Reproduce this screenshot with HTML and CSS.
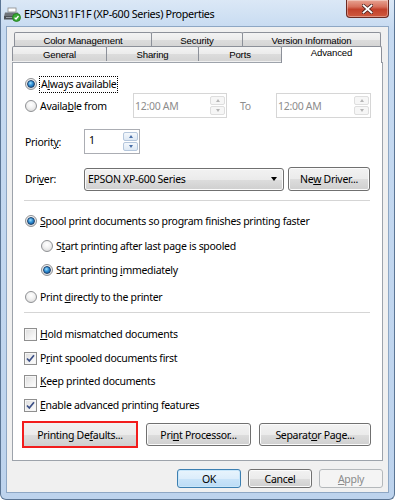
FILE: index.html
```html
<!DOCTYPE html>
<html lang="en">
<head>
    <meta charset="UTF-8">
    <title>EPSON311F1F (XP-600 Series) Properties</title>
    <link rel="stylesheet" href="styles.css">
</head>
<body>
    <div class="window">
        <div class="titlebar">
            <svg class="app-icon" width="17" height="15" viewBox="0 0 17 15">
                <rect x="4" y="1" width="8" height="4" fill="#fff" stroke="#8a8a8a" stroke-width="0.8"/>
                <path d="M1 5.5 H14 L15 9.5 H0 Z" fill="#6f747a"/>
                <rect x="0" y="9" width="15" height="3.5" fill="#4d5258"/>
                <rect x="2" y="10" width="9" height="1" fill="#9aa0a6"/>
                <circle cx="12.5" cy="10.5" r="4" fill="#3aaa35" stroke="#1f7a1c" stroke-width="0.8"/>
                <path d="M10.6 10.6 L12 12 L14.5 9" fill="none" stroke="#fff" stroke-width="1.3"/>
            </svg>
            <span class="title">EPSON311F1F (XP-600 Series) Properties</span>
            <div class="close-btn">
                <svg width="11" height="10" viewBox="0 0 11 10">
                    <path d="M1.5 1.5 L9.5 8.5 M9.5 1.5 L1.5 8.5" stroke="#4b2320" stroke-width="3.4" stroke-linecap="square"/>
                    <path d="M1.5 1.5 L9.5 8.5 M9.5 1.5 L1.5 8.5" stroke="#fff" stroke-width="1.8" stroke-linecap="square"/>
                </svg>
            </div>
        </div>

        <div class="client">
            <div class="tabs">
                <div class="tab-row back">
                    <div class="tab">Color Management</div>
                    <div class="tab">Security</div>
                    <div class="tab">Version Information</div>
                </div>
                <div class="tab-row front">
                    <div class="tab">General</div>
                    <div class="tab">Sharing</div>
                    <div class="tab">Ports</div>
                    <div class="tab active">Advanced</div>
                </div>
            </div>

            <div class="panel">
                <div class="row r-always">
                    <span class="radio checked"></span>
                    <span class="label focus">A<u>l</u>ways available</span>
                </div>

                <div class="row r-from">
                    <div class="opt">
                        <span class="radio"></span>
                        <span class="label">Availa<u>b</u>le from</span>
                    </div>
                    <div class="spin disabled">
                        <span class="spin-value">12:00 AM</span>
                        <span class="spin-btns"><span class="spin-up"></span><span class="spin-down"></span></span>
                    </div>
                    <span class="to">To</span>
                    <div class="spin disabled">
                        <span class="spin-value">12:00 AM</span>
                        <span class="spin-btns"><span class="spin-up"></span><span class="spin-down"></span></span>
                    </div>
                </div>

                <div class="row r-priority">
                    <span class="field-label">Priorit<u>y</u>:</span>
                    <div class="spin priority">
                        <span class="spin-value">1</span>
                        <span class="spin-btns"><span class="spin-up"></span><span class="spin-down"></span></span>
                    </div>
                </div>

                <div class="row r-driver">
                    <span class="field-label">Dri<u>v</u>er:</span>
                    <div class="combo">
                        <span>EPSON XP-600 Series</span>
                        <span class="combo-arrow"></span>
                    </div>
                    <div class="btn new-driver"><span>Ne<u>w</u> Driver...</span></div>
                </div>

                <div class="separator sep-1"></div>

                <div class="row r-spool">
                    <span class="radio checked"></span>
                    <span class="label"><u>S</u>pool print documents so program finishes printing faster</span>
                </div>
                <div class="row sub r-after">
                    <span class="radio"></span>
                    <span class="label">S<u>t</u>art printing after last page is spooled</span>
                </div>
                <div class="row sub r-immediately">
                    <span class="radio checked"></span>
                    <span class="label">Start printing <u>i</u>mmediately</span>
                </div>
                <div class="row r-direct">
                    <span class="radio"></span>
                    <span class="label">Print <u>d</u>irectly to the printer</span>
                </div>

                <div class="separator sep-2"></div>

                <div class="row r-hold">
                    <span class="checkbox"></span>
                    <span class="label"><u>H</u>old mismatched documents</span>
                </div>
                <div class="row r-spooled">
                    <span class="checkbox checked">
                        <svg width="11" height="11" viewBox="0 0 11 11"><path d="M2 5.5 L4.3 8 L9 2.2" fill="none" stroke="#3b4f86" stroke-width="1.7"/></svg>
                    </span>
                    <span class="label">P<u>r</u>int spooled documents first</span>
                </div>
                <div class="row r-keep">
                    <span class="checkbox"></span>
                    <span class="label"><u>K</u>eep printed documents</span>
                </div>
                <div class="row r-enable">
                    <span class="checkbox checked">
                        <svg width="11" height="11" viewBox="0 0 11 11"><path d="M2 5.5 L4.3 8 L9 2.2" fill="none" stroke="#3b4f86" stroke-width="1.7"/></svg>
                    </span>
                    <span class="label"><u>E</u>nable advanced printing features</span>
                </div>

                <div class="button-row">
                    <div class="btn marked"><span>Printing De<u>f</u>aults...</span></div>
                    <div class="btn processor"><span>Pri<u>n</u>t Processor...</span></div>
                    <div class="btn separator-page"><span>Separat<u>o</u>r Page...</span></div>
                </div>
            </div>

            <div class="footer">
                <div class="btn dlg default">OK</div>
                <div class="btn dlg">Cancel</div>
                <div class="btn dlg disabled"><span><u>A</u>pply</span></div>
            </div>
        </div>
    </div>
</body>
</html>
```

FILE: styles.css
```css
* {
    margin: 0;
    padding: 0;
    box-sizing: border-box;
}

body {
    font-family: 'Noto Sans', 'Open Sans', sans-serif;
    font-size: 10.5px;
    letter-spacing: -0.3px;
    color: #000;
    background: #fff;
}

u {
    text-decoration: underline;
    text-underline-offset: 1px;
}

/* window frame */

.window {
    width: 395px;
    height: 500px;
    display: flex;
    flex-direction: column;
    background: linear-gradient(180deg, #dbe8f6 0%, #c6daf1 30px, #bdd3ed 100%);
    border: 1px solid #5b7594;
    border-top: none;
    border-radius: 0 0 6px 6px;
    padding: 0 5px 6px 5px;
}

.titlebar {
    height: 26px;
    display: flex;
    align-items: center;
    flex: none;
}

.app-icon {
    margin: 2px 3px 0 -2px;
    flex: none;
}

.title {
    flex: 1;
    font-size: 10.8px;
    letter-spacing: -0.35px;
    padding-top: 1px;
}

.close-btn {
    align-self: flex-start;
    width: 43px;
    height: 18px;
    border: 1px solid #6b2a22;
    border-top: none;
    border-radius: 0 0 4px 4px;
    background: linear-gradient(180deg, #e8a493 0%, #d7705c 40%, #c2412b 55%, #cf5a3f 100%);
    box-shadow: inset 0 0 0 1px rgba(255, 255, 255, 0.35);
    display: flex;
    align-items: center;
    justify-content: center;
}

.client {
    flex: 1;
    background: #f0f0f0;
    border: 1px solid #8ea7c4;
    padding: 5px 5px 0 5px;
    display: flex;
    flex-direction: column;
}

/* tabs */

.tabs {
    font-family: 'Liberation Sans', Arial, sans-serif;
    font-size: 9.6px;
    letter-spacing: -0.15px;
}

.tab-row {
    display: flex;
}

.tab-row.back {
    margin: 0 1px 0 2px;
}

.tab-row.front {
    margin-top: -1px;
}

.tab {
    height: 15px;
    border: 1px solid #8c9099;
    border-bottom: none;
    margin-right: -1px;
    border-radius: 2px 2px 0 0;
    background: linear-gradient(180deg, #f3f3f3 0%, #ebebeb 50%, #dcdcdc 51%, #d4d4d4 100%);
    display: flex;
    align-items: center;
    justify-content: center;
}

.back .tab:nth-child(1) { width: 138px; }
.back .tab:nth-child(2) { width: 92px; }
.back .tab:nth-child(3) { width: 139px; margin-right: 0; }

.front .tab:nth-child(1) { width: 95px; }
.front .tab:nth-child(2) { width: 93px; }
.front .tab:nth-child(3) { width: 84px; }

.tab.active {
    width: 101px;
    margin-right: 0;
    height: 17px;
    margin-bottom: -1px;
    background: #fff;
    position: relative;
    align-items: flex-start;
    z-index: 1;
}

/* panel */

.panel {
    height: 399px;
    flex: none;
    background: #fff;
    border: 1px solid #9da3ab;
    padding: 12px 11px 0 11px;
}

.row {
    display: flex;
    align-items: center;
    height: 18px;
}

.label {
    margin-left: 3px;
    white-space: nowrap;
}

.label.focus {
    border: 1px dotted #000;
    padding: 0 1px 1px 1px;
    margin-left: 2px;
}

.radio {
    width: 12px;
    height: 12px;
    margin-left: 1px;
    border-radius: 50%;
    border: 1px solid #8f9194;
    background: radial-gradient(circle at 50% 35%, #ffffff 0%, #f1f1f1 45%, #d2d2d2 100%);
    display: flex;
    align-items: center;
    justify-content: center;
    flex: none;
}

.radio.checked::after {
    content: '';
    width: 6px;
    height: 6px;
    border-radius: 50%;
    background: radial-gradient(circle at 40% 35%, #9fe0ff 0%, #2f8fd4 45%, #114a86 100%);
    border: 0.5px solid #1b3f6b;
}

.checkbox {
    width: 13px;
    height: 13px;
    border: 1px solid #8f8f8f;
    background: linear-gradient(135deg, #dcdcdc 0%, #f2f2f2 60%, #ffffff 100%);
    box-shadow: inset 0 0 0 1px #f5f5f5;
    display: flex;
    align-items: center;
    justify-content: center;
    flex: none;
}

.r-from {
    display: grid;
    grid-template-columns: 109px 94px 49px 95px;
    align-items: center;
    height: 25px;
}

.opt {
    display: flex;
    align-items: center;
}

.to {
    padding-left: 13px;
    color: #8d8d8d;
}

.spin {
    display: flex;
    height: 25px;
    border: 1px solid #abadb3;
    background: #fff;
}

.spin-value {
    flex: 1;
    padding-left: 1px;
    display: flex;
    align-items: center;
}

.spin-btns {
    width: 16px;
    display: flex;
    flex-direction: column;
    gap: 1px;
    padding: 2px 1px 2px 0;
}

.spin-up,
.spin-down {
    flex: 1;
    border: 1px solid #c9cbcf;
    border-radius: 2px;
    background: linear-gradient(180deg, #fbfbfb 0%, #ececec 100%);
    display: flex;
    align-items: center;
    justify-content: center;
}

.spin-up::after {
    content: '';
    border-left: 2.5px solid transparent;
    border-right: 2.5px solid transparent;
    border-bottom: 3px solid #9a9a9a;
}

.spin-down::after {
    content: '';
    border-left: 2.5px solid transparent;
    border-right: 2.5px solid transparent;
    border-top: 3px solid #9a9a9a;
}

.spin.disabled {
    border-color: #d6d6d6;
    color: #8d8d8d;
}

.spin.disabled .spin-up,
.spin.disabled .spin-down {
    border-color: #dedede;
    background: #f6f6f6;
}

.spin.disabled .spin-up::after { border-bottom-color: #b5b5b5; }
.spin.disabled .spin-down::after { border-top-color: #b5b5b5; }

.r-priority {
    height: 25px;
    margin-top: 11px;
}

.field-label {
    width: 60px;
    padding-left: 1px;
    flex: none;
}

.spin.priority {
    width: 56px;
}

.spin.priority .spin-value {
    align-items: flex-start;
    padding: 3px 0 0 4px;
}

.spin.priority .spin-up,
.spin.priority .spin-down {
    border-color: #b4c6dc;
    background: linear-gradient(180deg, #f4f8fc 0%, #dde8f4 100%);
}

.spin.priority .spin-up::after { border-bottom-color: #4a6fa8; }
.spin.priority .spin-down::after { border-top-color: #4a6fa8; }

.r-driver {
    height: 24px;
    margin-top: 13px;
}

.combo {
    width: 200px;
    height: 23px;
    border: 1px solid #707070;
    border-radius: 3px;
    background: linear-gradient(180deg, #f2f2f2 0%, #ebebeb 50%, #dddddd 51%, #cfcfcf 100%);
    box-shadow: inset 0 0 0 1px #fbfbfb;
    display: flex;
    align-items: center;
    justify-content: space-between;
    padding: 0 6px 0 3px;
}

.combo-arrow {
    border-left: 3.5px solid transparent;
    border-right: 3.5px solid transparent;
    border-top: 4px solid #000;
}

.btn {
    height: 23px;
    border: 1px solid #707070;
    border-radius: 3px;
    background: linear-gradient(180deg, #f2f2f2 0%, #ebebeb 50%, #dddddd 51%, #cfcfcf 100%);
    box-shadow: inset 0 0 0 1px #fbfbfb;
    display: flex;
    align-items: center;
    justify-content: center;
    white-space: nowrap;
    flex: none;
}

.new-driver {
    width: 82px;
    height: 24px;
    margin-left: 4px;
}

.separator {
    height: 1px;
    background: #d5d5d5;
    margin-right: 1px;
}

.sep-1 { margin-top: 9px; }
.r-spool { margin-top: 11px; }
.row.sub { padding-left: 16px; }
.r-after { margin-top: 7px; }
.r-immediately { margin-top: 6px; }
.r-direct { margin-top: 9px; }
.sep-2 { margin-top: 6px; }
.r-hold { margin-top: 12px; }
.r-spooled { margin-top: 6px; }
.r-keep { margin-top: 5px; }
.r-enable { margin-top: 6px; }

.button-row {
    display: flex;
    align-items: center;
    gap: 7px;
    height: 23px;
    margin-top: 9px;
}

.btn.marked {
    width: 116px;
    height: 27px;
    margin-left: -2px;
    border: 2px solid #f21d1d;
    border-radius: 0;
    box-shadow: none;
}

.btn.processor { width: 105px; margin-left: 1px; }
.btn.separator-page { width: 112px; margin-left: 1px; }

/* dialog buttons */

.footer {
    display: flex;
    justify-content: flex-end;
    gap: 7px;
    padding-top: 8px;
}

.btn.dlg {
    width: 64px;
    height: 19px;
}

.btn.default {
    border-color: #3c7fb1;
    background: linear-gradient(180deg, #e8f4fc 0%, #dcedfb 50%, #c9e4f9 51%, #bcdcf5 100%);
    box-shadow: inset 0 0 0 1px #c8e6fa;
}

.btn.disabled {
    border-color: #b4b8bb;
    background: #f4f4f4;
    box-shadow: none;
    color: #8a8a8a;
}
```
